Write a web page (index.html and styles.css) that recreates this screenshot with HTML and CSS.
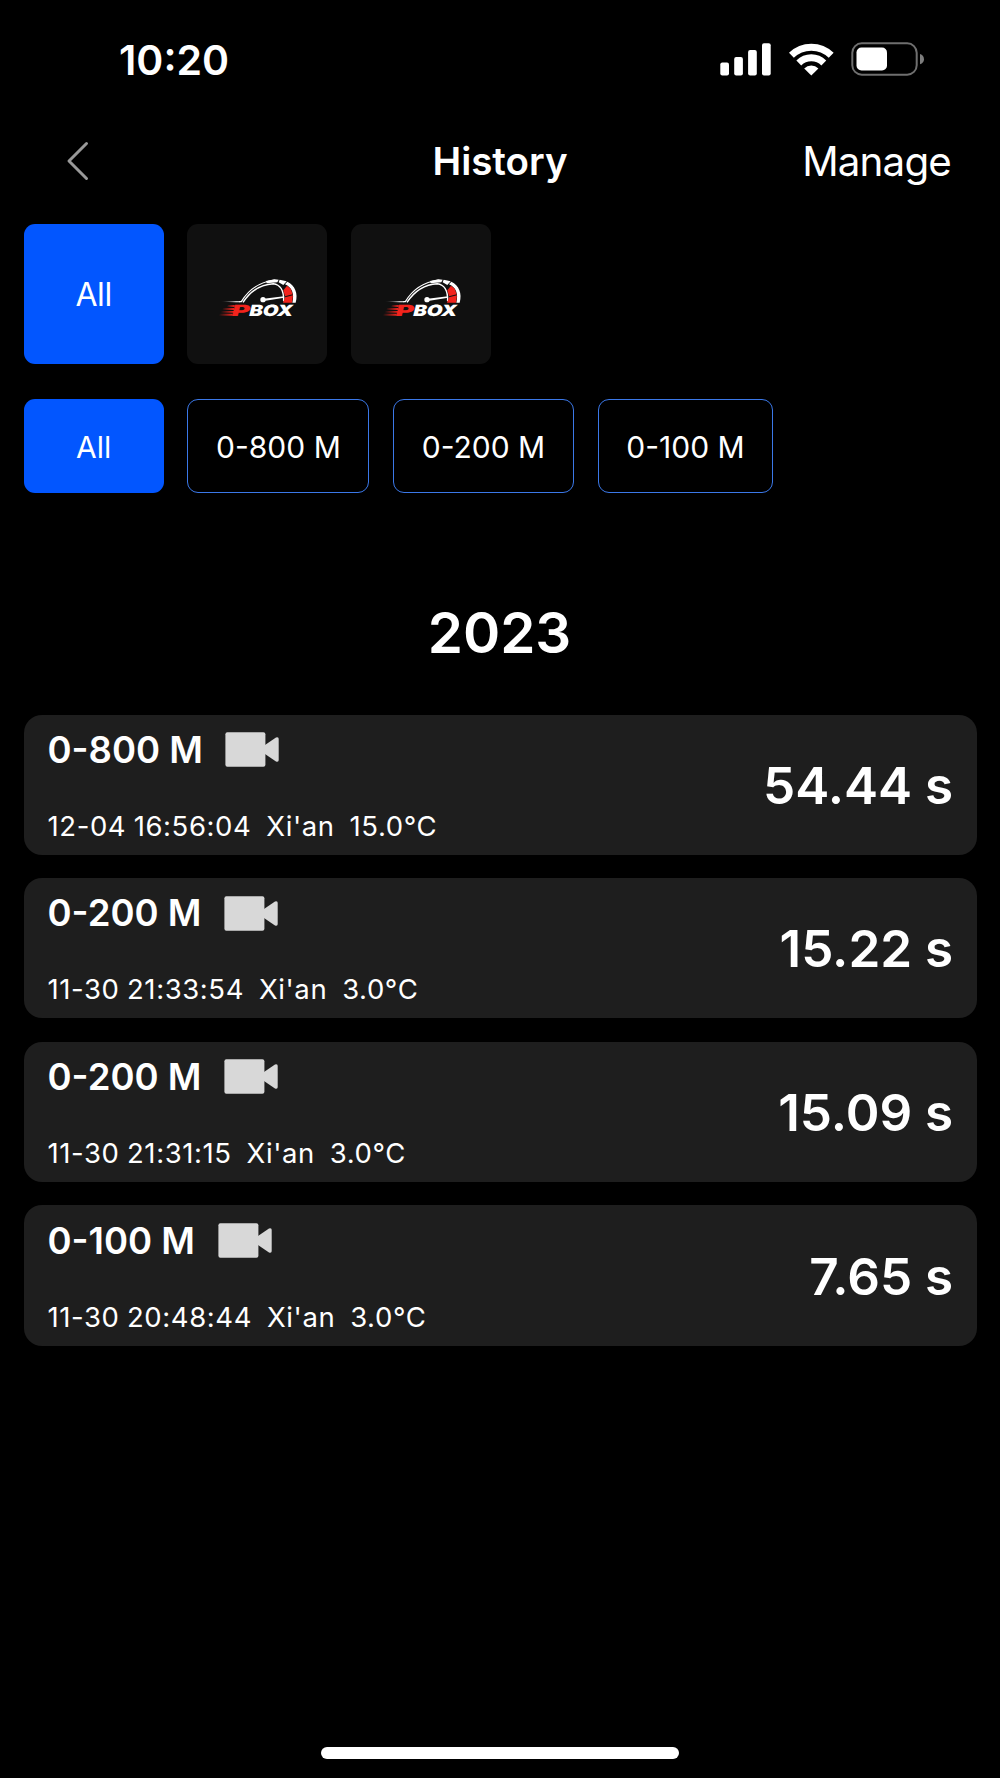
FILE: index.html
```html
<!DOCTYPE html>
<html lang="en">

<head>
	<meta charset="UTF-8">
	<meta name="viewport" content="width=device-width, initial-scale=1.0">
	<title>History</title>
	<link rel="stylesheet" href="styles.css">
</head>

<body>
	<!-- shared icons -->
	<svg class="defs" width="0" height="0" aria-hidden="true">
		<defs>
			<linearGradient id="speed" x1="0" x2="1" y1="0" y2="0">
				<stop offset="0" stop-color="#f2231c" stop-opacity="0" />
				<stop offset="1" stop-color="#f2231c" />
			</linearGradient>
			<linearGradient id="tail" gradientUnits="userSpaceOnUse" x1="14" x2="60" y1="95" y2="95">
				<stop offset="0" stop-color="#fff" stop-opacity="0" />
				<stop offset="1" stop-color="#fff" />
			</linearGradient>
		</defs>
		<symbol id="gauge" viewBox="0 0 270 165">
			<path d="M14 95L60 93.500H74L72 97H60Z" fill="url(#tail)" />
			<path d="M70 95H76C98 58 132 36 176 30" fill="none" stroke="#fff" stroke-width="3.500" />
			<path d="M81 97C104 62 136 43 172 41C192 43 204 62 203 94" fill="none" stroke="#fff" stroke-width="4.500" />
			<path d="M150 33L176 28L188 29L184 37L152 40Z" fill="#fff" />
			<path d="M191 29L212 34L202 45L188 37Z" fill="#fff" />
			<path d="M214 35C237 46 247 70 239 98L229 98C236 72 228 52 207 43Z" fill="#fff" />
			<path d="M213 47L224 56L230 73L207 79L202 61Z" fill="#f2231c" />
			<path d="M207 82L231 76L228 98H201Z" fill="#f2231c" />
			<path d="M143 86L204 79V83L144 93Z" fill="#fff" />
			<circle cx="141" cy="89" r="8" fill="#fff" />
			<path d="M36 105H56V111H32Z" fill="url(#speed)" />
			<path d="M22 114H54V120H18Z" fill="url(#speed)" />
			<path d="M16 123H54V128H14Z" fill="url(#speed)" />
			<path d="M12 131H50V137H8Z" fill="url(#speed)" />
		</symbol>
		<symbol id="camera" viewBox="0 0 54 35">
			<rect x="0.400" y="0.300" width="40" height="34.400" rx="2" />
			<path d="M40 13L51 5.500Q53.700 4.500 53.700 7V28Q53.700 30.500 51 29.500L40 22Z" />
		</symbol>
	</svg>

	<header class="status">
		<div class="clock">10:20</div>
		<div class="status-icons">
			<svg class="signal" viewBox="0 0 51 33" fill="#fff">
				<rect x="0.300" y="19.500" width="8.700" height="13" rx="2" />
				<rect x="14.200" y="14" width="8.700" height="18.500" rx="2" />
				<rect x="28.100" y="7" width="8.700" height="25.500" rx="2" />
				<rect x="42" y="0.300" width="8.700" height="32.200" rx="2" />
			</svg>
			<svg class="wifi" viewBox="0 0 45 33" fill="none" stroke="#fff" stroke-width="7">
				<path d="M2.400 12.200A28.600 28.600 0 0 1 42.200 12.200" />
				<path d="M9.800 19.900A18 18 0 0 1 34.800 19.900" />
				<path d="M22.300 32.500L15.200 25.400A10.200 10.200 0 0 1 29.400 25.400Z" fill="#fff" stroke="none" />
			</svg>
			<svg class="battery" viewBox="0 0 74 34">
				<rect x="1.300" y="1.300" width="64.400" height="31.400" rx="9.500" fill="none" stroke="#6f6f6f" stroke-width="2" />
				<rect x="5.500" y="5.500" width="30.500" height="23" rx="5" fill="#fff" />
				<path d="M69 12C74.300 13.500 74.300 20.800 69 22.300Z" fill="#7d7d7d" />
			</svg>
		</div>
	</header>

	<nav class="navbar">
		<svg class="back" viewBox="0 0 24 40">
			<path d="M20.500 2.500L3 20L20.500 37.500" />
		</svg>
		<h1>History</h1>
		<div class="manage">Manage</div>
	</nav>

	<div class="cars">
		<div class="car active">All</div>
		<div class="car">
			<svg class="logo" viewBox="0 0 270 165">
				<use href="#gauge" width="270" height="165" />
				<g transform="translate(0 137) skewX(-14)">
					<text class="logo-text logo-red" x="44" y="0" textLength="54" lengthAdjust="spacingAndGlyphs">P</text>
					<text class="logo-text" x="97" y="0" textLength="130" lengthAdjust="spacingAndGlyphs">BOX</text>
				</g>
			</svg>
		</div>
		<div class="car">
			<svg class="logo" viewBox="0 0 270 165">
				<use href="#gauge" width="270" height="165" />
				<g transform="translate(0 137) skewX(-14)">
					<text class="logo-text logo-red" x="44" y="0" textLength="54" lengthAdjust="spacingAndGlyphs">P</text>
					<text class="logo-text" x="97" y="0" textLength="130" lengthAdjust="spacingAndGlyphs">BOX</text>
				</g>
			</svg>
		</div>
	</div>

	<div class="filters">
		<div class="filter active">All</div>
		<div class="filter">0-800 M</div>
		<div class="filter">0-200 M</div>
		<div class="filter">0-100 M</div>
	</div>

	<h2>2023</h2>

	<main class="list">
		<div class="record">
			<div class="info">
				<div class="name">0-800 M <svg class="camera"><use href="#camera" /></svg></div>
				<div class="detail">12-04 16:56:04  Xi'an  15.0°C</div>
			</div>
			<div class="time">54.44 s</div>
		</div>
		<div class="record">
			<div class="info">
				<div class="name">0-200 M <svg class="camera"><use href="#camera" /></svg></div>
				<div class="detail">11-30 21:33:54  Xi'an  3.0°C</div>
			</div>
			<div class="time">15.22 s</div>
		</div>
		<div class="record">
			<div class="info">
				<div class="name">0-200 M <svg class="camera"><use href="#camera" /></svg></div>
				<div class="detail">11-30 21:31:15  Xi'an  3.0°C</div>
			</div>
			<div class="time">15.09 s</div>
		</div>
		<div class="record">
			<div class="info">
				<div class="name">0-100 M <svg class="camera"><use href="#camera" /></svg></div>
				<div class="detail">11-30 20:48:44  Xi'an  3.0°C</div>
			</div>
			<div class="time">7.65 s</div>
		</div>
	</main>

	<div class="home-bar"></div>
</body>

</html>
```
FILE: styles.css
```css
*,
*::before,
*::after {
	box-sizing: border-box;
}

body {
	display: flex;
	flex-direction: column;
	width: 1000px;
	height: 1778px;
	margin: 0;
	overflow: hidden;
	background: #000;
	color: #fff;
	font-family: Inter, "Liberation Sans", sans-serif;
}

svg {
	display: block;
	flex: none;
}

.defs {
	position: absolute;
}

h1,
h2 {
	margin: 0;
	font-weight: 600;
}

/* status bar */
.status {
	display: flex;
	align-items: center;
	justify-content: space-between;
	height: 120px;
	padding: 0 75px 0 119px;
}

.clock {
	font-size: 41px;
	font-weight: 600;
}

.status-icons {
	display: flex;
	align-items: center;
	margin-bottom: 2px;
}

.signal {
	width: 51px;
	height: 33px;
}

.wifi {
	width: 45px;
	height: 33px;
	margin: 0 17px 0 18px;
}

.battery {
	width: 74px;
	height: 34px;
}

/* title bar */
.navbar {
	display: grid;
	grid-template-columns: 1fr auto 1fr;
	align-items: center;
	height: 82px;
	padding: 0 49px 0 66px;
}

.navbar h1 {
	margin-right: 17px;
	font-size: 38.5px;
}

.back {
	width: 24px;
	height: 40px;
	fill: none;
	stroke: #999;
	stroke-width: 3;
	stroke-linecap: round;
	stroke-linejoin: round;
}

.manage {
	text-align: right;
	font-size: 40.3px;
	letter-spacing: -0.8px;
}

/* car and distance filters */
.cars,
.filters {
	display: flex;
	gap: 23.4px;
	padding-left: 23.5px;
}

.cars {
	margin-top: 22px;
}

.filters {
	gap: 23.7px;
	margin-top: 35px;
}

.car,
.filter {
	display: flex;
	align-items: center;
	justify-content: center;
	border-radius: 11px;
}

.car {
	width: 140.2px;
	height: 140.2px;
	background: #101010;
	font-size: 32px;
	letter-spacing: -0.4px;
}

.filter {
	height: 94px;
	padding: 1px 27.7px 0;
	border: 1.3px solid #3b78e8;
	font-size: 30px;
}

.active {
	width: 140.2px;
	border: 0;
	background: #0256ff;
}

.logo {
	width: 90px;
	height: 55px;
	margin: 7px 0 0 8px;
}

.logo-text {
	fill: #fff;
	font-size: 47px;
	font-weight: 900;
}

.logo-red {
	fill: #f2231c;
}

h2 {
	margin: 105px 0 46.5px;
	padding-right: 1px;
	text-align: center;
	font-size: 56.5px;
	line-height: 70px;
}

/* results */
.list {
	display: flex;
	flex-direction: column;
	gap: 23.4px;
	padding: 0 23.5px;
}

.record {
	display: flex;
	align-items: center;
	justify-content: space-between;
	height: 140.2px;
	padding: 0 23.3px 0 24px;
	border-radius: 18px;
	background: #1e1e1e;
}

.info {
	display: flex;
	flex-direction: column;
	justify-content: space-between;
	height: 116px;
	padding-top: 1px;
}

.name {
	display: flex;
	align-items: center;
	gap: 22.5px;
	height: 44px;
	font-size: 36.5px;
	font-weight: 600;
}

.camera {
	width: 54px;
	height: 35px;
	fill: #d8d8d8;
}

.detail {
	white-space: pre;
	font-size: 27.5px;
	line-height: 34px;
	letter-spacing: 0.6px;
	word-spacing: -0.9px;
}

.time {
	font-size: 51.2px;
	font-weight: 600;
}

.home-bar {
	width: 358px;
	height: 12px;
	margin: auto auto 19.5px;
	border-radius: 6px;
	background: #fff;
}
```
